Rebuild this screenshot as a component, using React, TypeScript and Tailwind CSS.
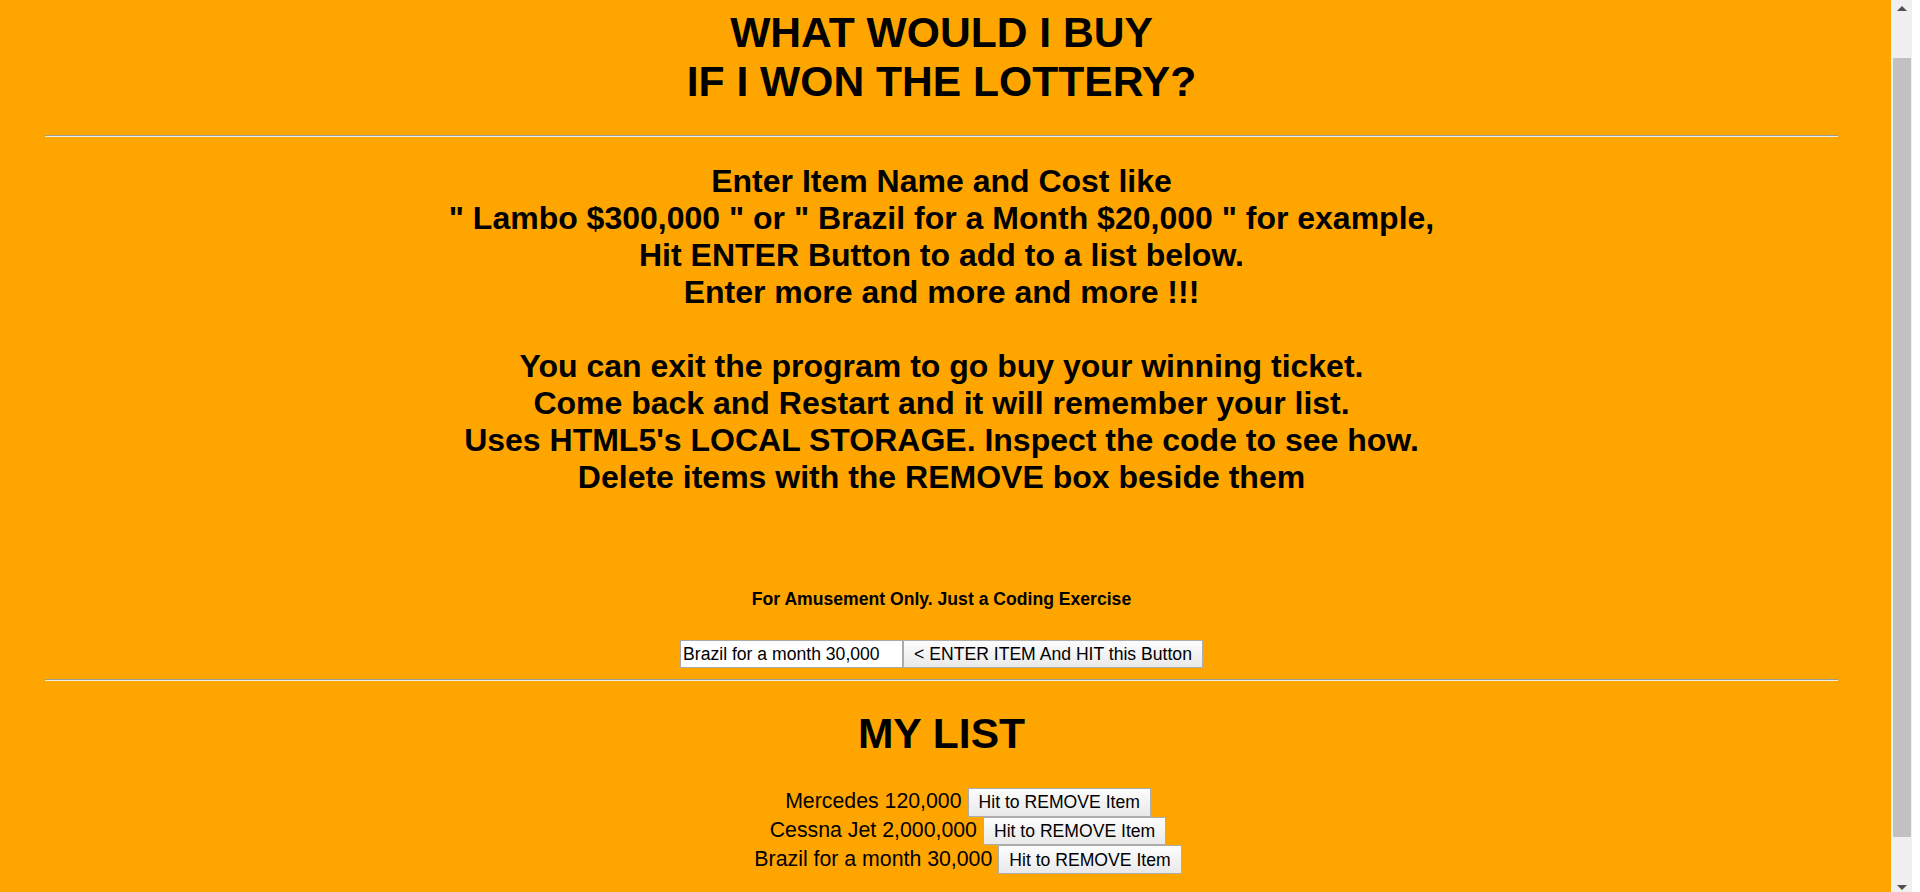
import React from "react";

function Scrollbar() {
  return (
    <div className="relative w-[21px] h-[892px] bg-[#f0f0f0] shrink-0">
      <div className="absolute left-[6px] top-[6px] w-0 h-0 border-l-[5px] border-r-[5px] border-b-[5px] border-l-transparent border-r-transparent border-b-[#505050]" />
      <div className="absolute left-[2px] right-[1px] top-[58px] h-[779px] bg-[#c1c1c1]" />
      <div className="absolute left-[6px] bottom-[2px] w-0 h-0 border-l-[5px] border-r-[5px] border-t-[5px] border-l-transparent border-r-transparent border-t-[#505050]" />
    </div>
  );
}

export default function App() {
  const items = ["Mercedes 120,000", "Cessna Jet 2,000,000", "Brazil for a month 30,000"];
  const btn =
    "px-[10px] border border-[#adadad] bg-gradient-to-b from-[#fdfdfd] to-[#e9e9e9] text-[17.6px] leading-[20.2px] text-black font-['Liberation_Sans',Arial,sans-serif]";
  return (
    <div className="flex h-[892px] overflow-hidden bg-white">
      <div className="w-[1891px] shrink-0 bg-[#ffa500] text-black font-['Liberation_Sans',Arial,sans-serif] pr-[8px] pt-[8px] text-center">
        <h1 className="text-[42.6px] font-bold leading-[49px]">
          WHAT WOULD I BUY
          <br />
          IF I WON THE LOTTERY?
        </h1>
        <div className="mx-[45px] mt-[29px] h-[2px] border-t border-t-[#9a9a9a] border-b border-b-[#eeeeee]" />
        <div className="mt-[26px] text-[32px] font-bold leading-[37px]">
          Enter Item Name and Cost like
          <br />" Lambo $300,000 " or " Brazil for a Month $20,000 " for example,
          <br />
          Hit ENTER Button to add to a list below.
          <br />
          Enter more and more and more !!!
          <br />
          <br />
          You can exit the program to go buy your winning ticket.
          <br />
          Come back and Restart and it will remember your list.
          <br />
          Uses HTML5's LOCAL STORAGE. Inspect the code to see how.
          <br />
          Delete items with the REMOVE box beside them
        </div>
        <p className="mt-[93px] text-[17.6px] font-bold leading-[20.2px]">For Amusement Only. Just a Coding Exercise</p>
        <div className="mt-[31px] flex justify-center">
          <input
            defaultValue="Brazil for a month 30,000"
            className="w-[223px] h-[28px] border border-[#a9a9a9] bg-white px-[2px] text-[17.6px] text-black outline-none font-['Liberation_Sans',Arial,sans-serif]"
          />
          <button className={"h-[28px] " + btn}>{"< ENTER ITEM And HIT this Button"}</button>
        </div>
        <div className="mx-[45px] mt-[11px] h-[2px] border-t border-t-[#9a9a9a] border-b border-b-[#eeeeee]" />
        <h2 className="mt-[28px] text-[42.6px] font-bold leading-[49px]">MY LIST</h2>
        <div className="mt-[28px] pl-[53px] flex flex-col items-center text-[21.3px]">
          {items.map((it) => (
            <div key={it} className="h-[28.7px] flex items-baseline justify-center gap-[6px]">
              <span>{it}</span>
              <button className={"h-[28.5px] " + btn}>Hit to REMOVE Item</button>
            </div>
          ))}
        </div>
      </div>
      <Scrollbar />
    </div>
  );
}
